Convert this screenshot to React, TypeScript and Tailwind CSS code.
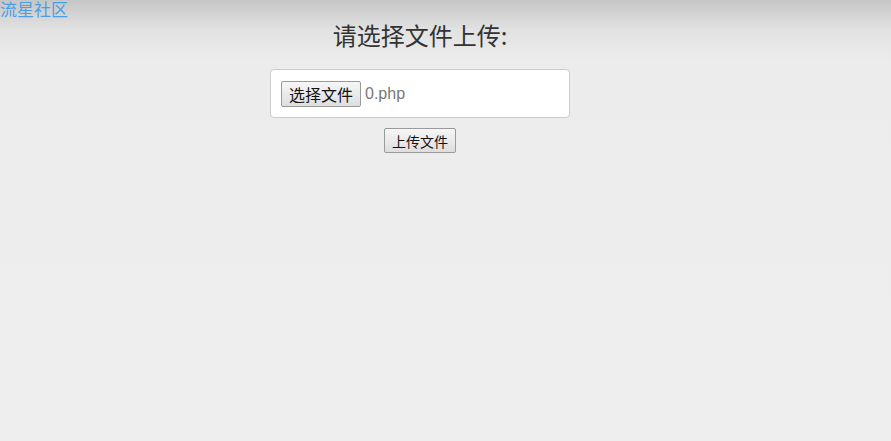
export default function App() {
    const font = { fontFamily: '"Noto Sans CJK SC", "Liberation Sans", sans-serif' }

    return (
        <div
            className="min-h-[441px] w-full bg-[linear-gradient(to_bottom,#c6c6c6_0px,#e2e2e2_30px,#ececec_60px,#eeeeee_100%)] text-[#333]"
            style={font}
        >
            <a href="#" className="block w-fit text-[17px] leading-[18px] text-[#4a9ee8] no-underline">
                流星社区
            </a>

            <div className="flex w-[840px] flex-col items-center pt-[2px]">
                <h2 className="text-[24px] leading-[30px] font-normal text-[#333]">请选择文件上传:</h2>

                <div className="mt-[19px] flex h-[49px] w-[300px] items-center rounded-[4px] border border-[#cccccc] bg-white px-[10px]">
                    <button className="h-[26px] w-[80px] rounded-[2px] border border-[#9a9a9a] bg-[linear-gradient(to_bottom,#f6f6f6,#dedede)] text-[16px] leading-[24px] text-[#111]">
                        选择文件
                    </button>
                    <span className="ml-[4px] text-[16px] leading-[24px] text-[#777]" style={{ fontFamily: '"Liberation Sans", sans-serif' }}>
                        0.php
                    </span>
                </div>

                <button className="mt-[10px] h-[25px] w-[72px] rounded-[2px] border border-[#9a9a9a] bg-[linear-gradient(to_bottom,#f6f6f6,#dedede)] text-[14px] leading-[22px] text-[#111]">
                    上传文件
                </button>
            </div>
        </div>
    )
}
